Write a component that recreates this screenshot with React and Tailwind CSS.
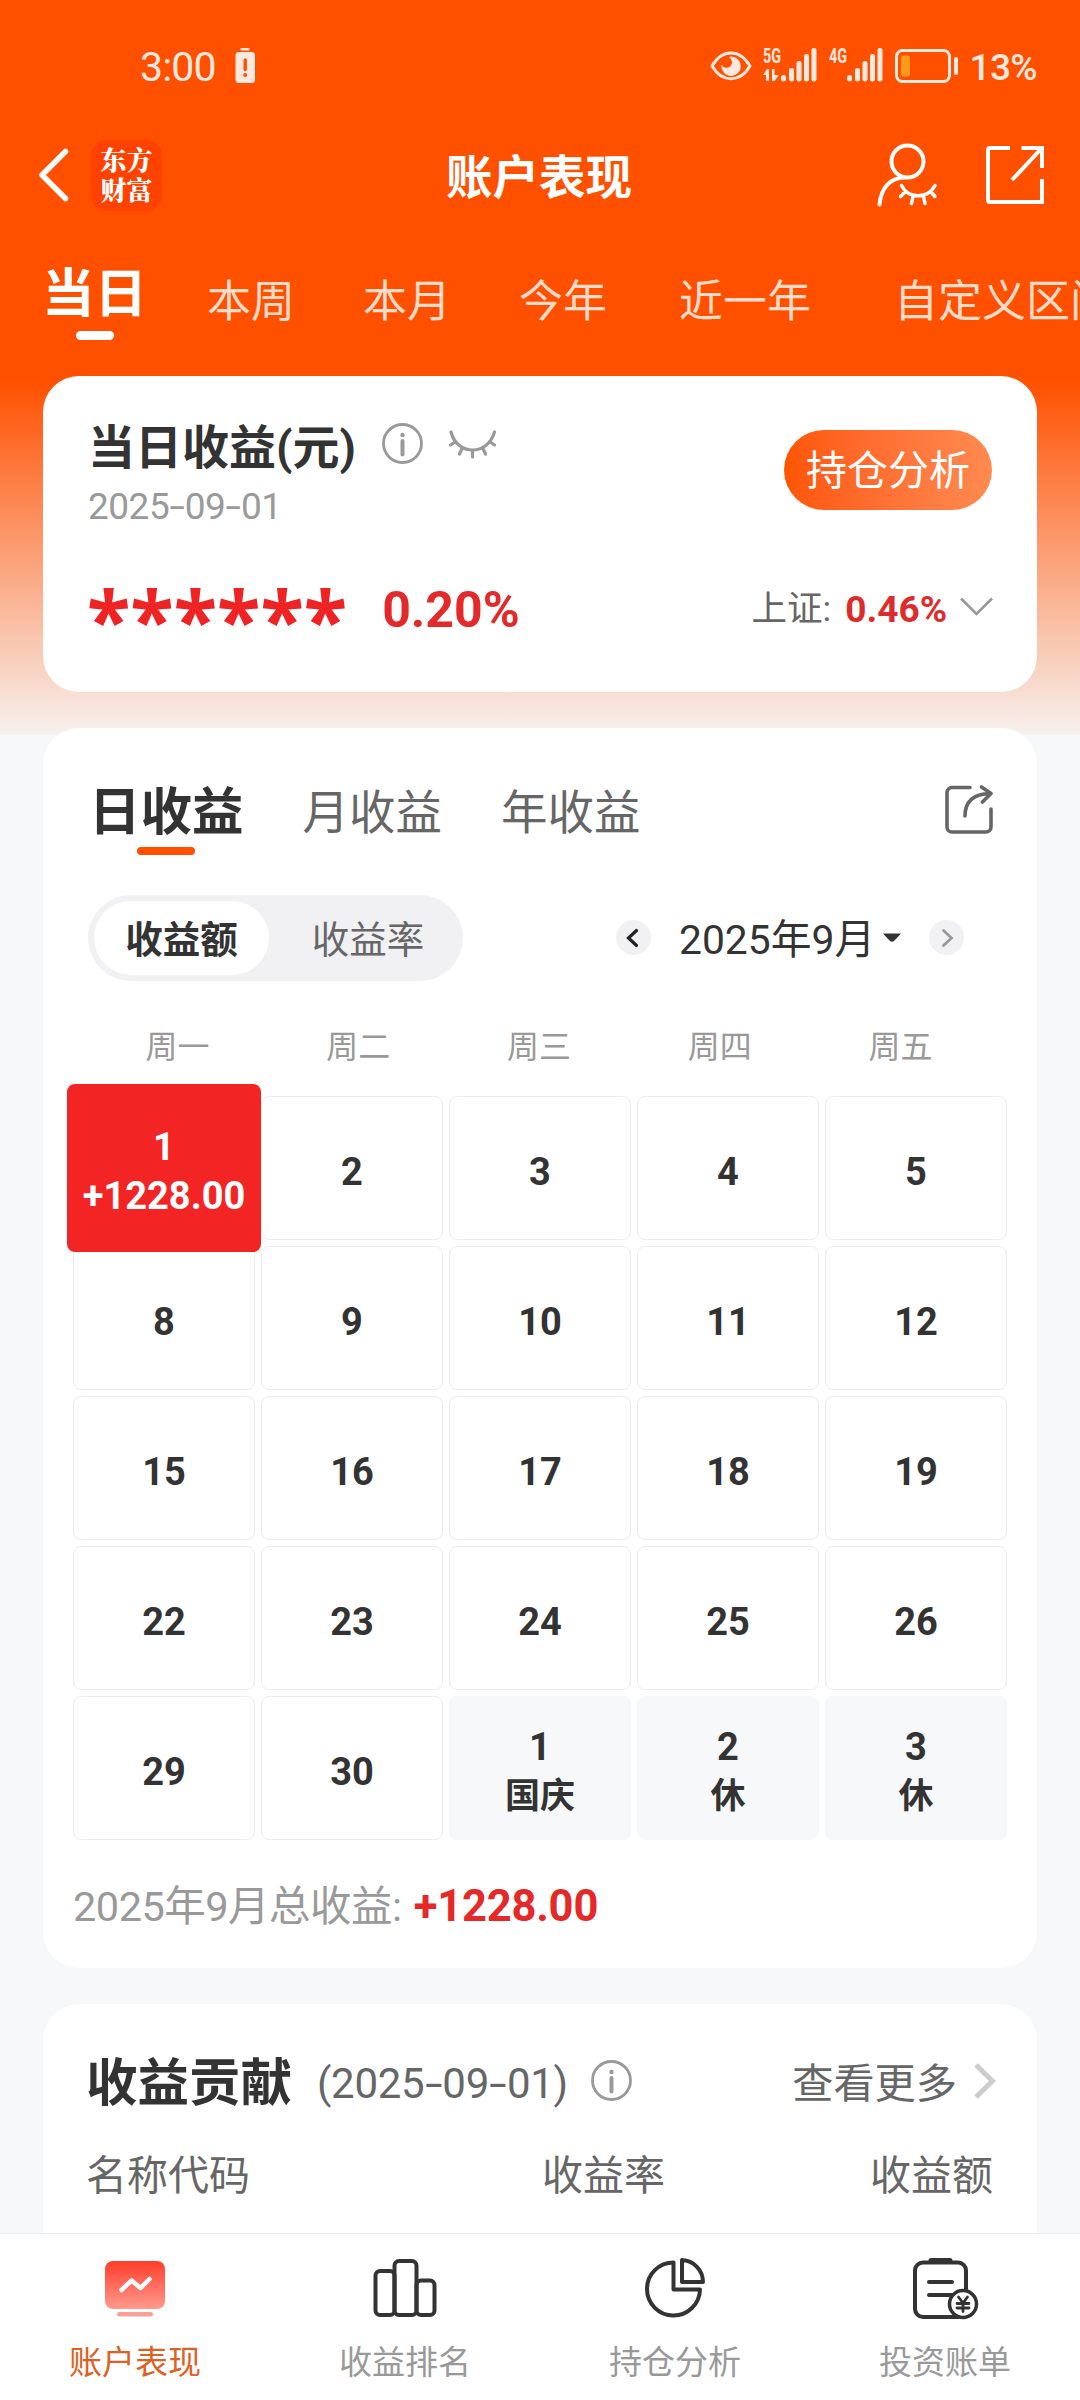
import { useState } from "react"
import clsx from "clsx"

const RANGES = [
  { label: "本周", gap: "ml-[60px]" },
  { label: "本月", gap: "ml-[68px]" },
  { label: "今年", gap: "ml-[68px]" },
  { label: "近一年", gap: "ml-[72px]" },
  { label: "自定义区间", gap: "ml-[83px]" }
]

const WEEKDAYS = ["周一", "周二", "周三", "周四", "周五"]

const DAYS = [
  { day: 1, note: "+1228.00", gain: true },
  { day: 2 }, { day: 3 }, { day: 4 }, { day: 5 },
  { day: 8 }, { day: 9 }, { day: 10 }, { day: 11 }, { day: 12 },
  { day: 15 }, { day: 16 }, { day: 17 }, { day: 18 }, { day: 19 },
  { day: 22 }, { day: 23 }, { day: 24 }, { day: 25 }, { day: 26 },
  { day: 29 }, { day: 30 },
  { day: 1, note: "国庆", rest: true },
  { day: 2, note: "休", rest: true },
  { day: 3, note: "休", rest: true }
]

const NAV = [
  { label: "账户表现", Icon: TrendIcon },
  { label: "收益排名", Icon: RankIcon },
  { label: "持仓分析", Icon: PieIcon },
  { label: "投资账单", Icon: BillIcon }
]

export default function App() {
  return (
    <div className="flex h-[2400px] w-[1080px] flex-col overflow-hidden bg-[linear-gradient(to_bottom,#ff5000_380px,#f7f1ef_735px,#f7f8fa_735px)] font-['Roboto','Noto_Sans_CJK_SC',sans-serif] text-[#333]">
      <StatusBar />
      <Header />
      <RangeTabs />
      <main className="flex min-h-0 flex-1 flex-col gap-9 overflow-hidden px-[43px]">
        <TodayCard />
        <CalendarCard />
        <ContributionCard />
      </main>
      <BottomNav />
    </div>
  )
}

function StatusBar() {
  return (
    <div className="flex h-[134px] shrink-0 items-center pl-[140px] pr-[43px] text-[#ffe9df]">
      <span className="text-[41px] leading-none tracking-[-0.8px]">3:00</span>
      <svg className="ml-[19px] -mt-[2px]" width="21" height="36" viewBox="0 0 21 36">
        <rect x="5.5" y="0" width="9" height="2.6" rx="1" fill="currentColor" />
        <rect x="0.5" y="4" width="19.5" height="31" rx="3.5" fill="currentColor" />
        <path d="M10.2 12v9.5" stroke="#ff5000" strokeWidth="3.4" strokeLinecap="round" />
        <circle cx="10.2" cy="27" r="2" fill="#ff5000" />
      </svg>

      <svg className="ml-auto -mt-[3px]" width="42" height="30" viewBox="0 0 42 30">
        <path d="M2 15C12-2.5 30-2.5 40 15C30 32 12 32 2 15Z" fill="none" stroke="currentColor" strokeWidth="3" strokeLinejoin="round" />
        <path d="M20.5 5.5A9.7 9.7 0 1 1 11.5 13.5A5.5 5.5 0 1 0 19.2 6.5Z" fill="currentColor" />
      </svg>
      <Signal label="5G" className="ml-[11px]" arrows />
      <Signal label="4G" className="ml-[12px]" />
      <svg className="ml-[12px] -mt-[2px]" width="65" height="34" viewBox="0 0 65 34">
        <rect x="1.5" y="1.5" width="53" height="31" rx="6" fill="none" stroke="currentColor" strokeWidth="3" />
        <rect x="6" y="6.5" width="9" height="21" rx="3" fill="#ff9b1a" />
        <rect x="59" y="8" width="4" height="18" rx="2" fill="currentColor" />
      </svg>
      <span className="ml-[9px] text-[37px] leading-none tracking-[-0.6px] font-medium">13%</span>
    </div>
  )
}

function Signal({ label, className, arrows }) {
  return (
    <svg className={clsx("-mt-[4px] overflow-visible", className)} width="54" height="34" viewBox="0 0 54 34" fill="currentColor">
      <text x="0" y="15" fontSize="20" fontWeight="700" textLength="18" lengthAdjust="spacingAndGlyphs">{label}</text>
      {arrows && (
        <path d="M0 27l4-6h2v12H3v-6zM9 21h2.500v6H16l-4.500 6H9z" />
      )}
      <rect x="18" y="27" width="5" height="6.500" rx="2.3" />
      <rect x="26" y="20" width="5" height="13.500" rx="2.3" />
      <rect x="33.500" y="13" width="5" height="20.500" rx="2.3" />
      <rect x="41" y="6" width="5" height="27.500" rx="2.3" />
      <rect x="48.500" y="0" width="5" height="33.500" rx="2.3" />
    </svg>
  )
}

function Header() {
  return (
    <header className="grid h-[82px] shrink-0 grid-cols-3 items-center pl-[37px] pr-[36px] text-white">
      <div className="flex items-center">
        <svg width="32" height="56" viewBox="0 0 32 56" fill="none" stroke="currentColor" strokeWidth="5.500" strokeLinecap="round" strokeLinejoin="round">
          <path d="M28.500 4.500L5 28L28.500 51.500" />
        </svg>
        <div className="ml-[22px] flex size-[71px] items-center justify-center rounded-[16px] bg-[#ff4200]">
          <span className="-mt-[3px] w-[54px] text-center font-['Noto_Serif_CJK_SC','Noto_Sans_CJK_SC',serif] text-[26px] leading-[30px] font-black">东方财富</span>
        </div>
      </div>
      <h1 className="-ml-[3px] pt-[7px] text-center text-[46.5px] leading-none font-bold">账户表现</h1>
      <div className="flex items-center justify-end gap-[48px]">
        <svg width="62" height="64" viewBox="0 0 62 64" fill="none" stroke="currentColor" strokeWidth="4" strokeLinecap="round">
          <circle cx="31.500" cy="18.500" r="16" />
          <path d="M3.500 61.500C5 44 15 35 28 34.500" />
          <path d="M25.500 42.500C32 56 52 56 59 42.500M29 49l-4.500 4.500M37 53.500l-1.500 7M47.500 53.500l1.500 7M55 49l4 4.500" strokeWidth="3.500" />
        </svg>
        <svg width="58" height="60" viewBox="0 0 58 60" fill="none" stroke="currentColor" strokeWidth="4">
          <path d="M24 3H4a2 2 0 0 0-2 2v50a2 2 0 0 0 2 2h52V34" />
          <path d="M35.500 3H56v20M55 4L26 35" />
        </svg>
      </div>
    </header>
  )
}

function RangeTabs() {
  return (
    <nav className="flex h-[160px] shrink-0 overflow-hidden pl-[42px] whitespace-nowrap">
      <button className="flex w-[105px] shrink-0 flex-col items-center self-start pt-[53px] text-[52.500px] leading-[50px] font-bold text-white">
        当日
        <span className="mt-[12px] h-[9px] w-[38px] rounded-full bg-white" />
      </button>
      {RANGES.map(r => (
        <button key={r.label} className={clsx("shrink-0 self-start pt-[64px] text-[44px] leading-[44px] text-[#ffdcca]", r.gap)}>
          {r.label}
        </button>
      ))}
    </nav>
  )
}

// los guiones van más anchos que los de la fuente
function DateText({ value }) {
  return value.split("-").map((part, i) => (
    <span key={i}>
      {i > 0 && <span className="mx-[0.08em] inline-block scale-x-150">-</span>}
      {part}
    </span>
  ))
}

function InfoIcon() {
  return (
    <svg width="41" height="41" viewBox="0 0 41 41" fill="none" stroke="#999" strokeWidth="2.800">
      <circle cx="20.500" cy="20.500" r="19" />
      <path d="M20.500 18v13.500" strokeWidth="4" strokeLinecap="round" />
      <circle cx="20.500" cy="12" r="2.200" fill="#999" stroke="none" />
    </svg>
  )
}

function TodayCard() {
  return (
    <section className="h-[316px] shrink-0 rounded-[36px] bg-white pt-[46px] pr-[45px] pl-[45px]">
      <div className="flex items-start justify-between">
        <div>
          <div className="flex h-[48px] items-center">
            <h2 className="pt-[3px] text-[47px] leading-[48px] font-bold">当日收益(元)</h2>
            <span className="ml-[26px] -mt-[5px]"><InfoIcon /></span>
            <svg className="ml-[26px] -mt-[4px]" width="47" height="29" viewBox="0 0 47 29" fill="none" stroke="#999" strokeWidth="3.200" strokeLinecap="round">
              <path d="M2 2C8 26 39 26 45.500 2M6 12l-4.500 3M13 18.500l-2.500 5.500M23.500 20.500v6.500M34 18.500l2.500 5.500M41 12l4.500 3" />
            </svg>
          </div>
          <div className="mt-[19px] text-[37px] leading-[36px] tracking-[-0.5px] text-[#999]">
            <DateText value="2025-09-01" />
          </div>
        </div>
        <button className="mt-[8px] h-[80px] w-[208px] rounded-full bg-linear-to-r from-[#ff5500] to-[#ff8a50] pt-[3px] text-[41px] leading-[77px] text-white">
          持仓分析
        </button>
      </div>
      <div className="mt-[54px] flex h-[60px] items-center">
        <span className="-ml-[1px] h-[60px] font-['Noto_Sans'] text-[80px] leading-[80px] font-bold text-[#ee2424]">******</span>
        <span className="ml-[35px] pt-[2px] text-[50px] leading-[60px] font-bold text-[#e32929]">0.20%</span>
        <span className="ml-auto pt-[1px] text-[35.500px] text-[#666]">上证:</span>
        <span className="ml-[14px] pt-[1px] text-[37px] font-bold text-[#dd2c2c]">0.46%</span>
        <svg className="mr-[-2px] ml-[12px] -mt-[4px]" width="35" height="22" viewBox="0 0 35 22" fill="none" stroke="#999" strokeWidth="2.600">
          <path d="M2 2.500l15.500 15.500L33 2.500" />
        </svg>
      </div>
    </section>
  )
}

function CalendarCard() {
  const [mode, setMode] = useState("amount")

  return (
    <section className="h-[1240px] shrink-0 rounded-[36px] bg-white px-[30px]">
      <div className="flex h-[167px] items-start pt-[59px] pr-[14px] pl-[16px]">
        <div className="flex flex-col items-center text-[51.500px] leading-[52px] font-bold">
          日收益
          <span className="mt-[8px] h-[8px] w-[58px] rounded-full bg-[#ff5000]" />
        </div>
        <span className="ml-[59px] text-[46.500px] leading-[52px] text-[#666]">月收益</span>
        <span className="ml-[59px] text-[46.500px] leading-[52px] text-[#666]">年收益</span>
        <svg className="ml-auto -mt-[3px]" width="49" height="50" viewBox="0 0 49 50" fill="none" stroke="#666" strokeWidth="3.600" strokeLinecap="round" strokeLinejoin="round">
          <path d="M26 3.500H8a5 5 0 0 0-5 5V43a5 5 0 0 0 5 5h34a5 5 0 0 0 5-5V25" />
          <path d="M21 32C21 17 30 10 46 9.500M37.500 3l9.500 6.500l-8.500 8.500" />
        </svg>
      </div>

      <div className="flex h-[86px] items-center pl-[15px]">
        <div className="flex h-[86px] w-[375px] rounded-full bg-[#f1f1f4] p-[6px] text-[37.500px] leading-[78px]">
          <button
            className={clsx("w-[175px] rounded-full", mode === "amount" ? "bg-white font-bold" : "text-[#666]")}
            onClick={() => setMode("amount")}
          >
            收益额
          </button>
          <button
            className={clsx("flex-1 rounded-full pl-[10px]", mode === "rate" ? "bg-white font-bold" : "text-[#666]")}
            onClick={() => setMode("rate")}
          >
            收益率
          </button>
        </div>
        <svg className="ml-[153px] -mt-[2px]" width="35" height="35" viewBox="0 0 35 35" fill="none">
          <circle cx="17.500" cy="17.500" r="17.500" fill="#f1f1f4" />
          <path d="M20.500 10.500l-8 7.500l8 7.500" stroke="#222" strokeWidth="3.200" strokeLinecap="round" />
        </svg>
        <span className="ml-[28px] pt-[4px] text-[40.800px] leading-none">2025年9月</span>
        <svg className="ml-[8px] -mt-[2px]" width="18" height="9" viewBox="0 0 18 9">
          <path d="M0 0.500h18L11 8q-2 1.500-4 0z" fill="#333" />
        </svg>
        <svg className="ml-[28px] -mt-[2px]" width="35" height="35" viewBox="0 0 35 35" fill="none">
          <circle cx="17.500" cy="17.500" r="17.500" fill="#f1f1f4" />
          <path d="M14.500 10.500l8 7.500l-8 7.500" stroke="#999" strokeWidth="2.800" strokeLinecap="round" />
        </svg>
      </div>

      <div className="mt-[49px] grid grid-cols-5 pr-[16px] pl-[14px] text-center text-[32px] leading-[34px] text-[#999]">
        {WEEKDAYS.map(d => <span key={d}>{d}</span>)}
      </div>

      <div className="mt-[32px] grid grid-cols-5 gap-[6px]">
        {DAYS.map((d, i) => <DayCell key={i} {...d} />)}
      </div>

      <p className="mt-[42px] flex items-center text-[41.500px] leading-[50px] tracking-[-0.500px] text-[#999]">
        2025年9月总收益:
        <span className="ml-[12px] text-[43.500px] tracking-[-0.200px] font-bold text-[#e52828]">+1228.00</span>
      </p>
    </section>
  )
}

function DayCell({ day, note, gain, rest }) {
  return (
    <div
      className={clsx(
        "flex flex-col items-center justify-center rounded-[8px] pt-[8px] text-[38px] leading-[49px] font-bold",
        gain && "z-10 -m-[6px] -my-[12px] h-[168px] bg-[#f32424] text-white",
        rest && "h-[144px] bg-[#f7f8fa]",
        !gain && !rest && "h-[144px] border border-[#ededed]"
      )}
    >
      <span>{day}</span>
      {note && <span className={rest ? "text-[35px]" : "text-[38px]"}>{note}</span>}
    </div>
  )
}

function ContributionCard() {
  return (
    <section className="h-[300px] shrink-0 rounded-t-[36px] bg-white pr-[44px] pl-[43px] pt-[54px]">
      <div className="flex h-[52px] items-center">
        <h2 className="text-[51.500px] leading-[52px] font-bold">收益贡献</h2>
        <span className="ml-[25px] text-[42px] leading-[52px] tracking-[-0.300px] text-[#666]">
          <DateText value="(2025-09-01)" />
        </span>
        <span className="ml-[23px] -mt-[7px]"><InfoIcon /></span>
        <span className="ml-auto text-[41.200px] leading-[52px] text-[#666]">查看更多</span>
        <svg className="ml-[16px] mr-[-4px] -mt-[7px]" width="24" height="38" viewBox="0 0 24 38" fill="none" stroke="#ccc" strokeWidth="5">
          <path d="M3 3l16.500 16L3 35" />
        </svg>
      </div>
      <div className="mt-[42px] grid grid-cols-[1fr_auto_1fr] text-[41px] leading-[48px] text-[#666]">
        <span>名称代码</span>
        <span className="translate-x-[64px]">收益率</span>
        <span className="text-right">收益额</span>
      </div>
    </section>
  )
}

function BottomNav() {
  return (
    <nav className="grid h-[167px] shrink-0 grid-cols-4 border-t border-[#ebecef] bg-white">
      {NAV.map(({ label, Icon }, i) => (
        <button key={label} className="flex flex-col items-center pt-[22px]">
          <Icon />
          <span className={clsx("mt-[21px] text-[33px] leading-[40px]", i === 0 ? "text-[#dc6224]" : "text-[#999]")}>
            {label}
          </span>
        </button>
      ))}
    </nav>
  )
}

function TrendIcon() {
  return (
    <svg width="66" height="66" viewBox="0 0 66 66" fill="none">
      <defs>
        <linearGradient id="trend" x1="0" y1="0" x2="0" y2="1">
          <stop stopColor="#ff3d2a" />
          <stop offset="1" stopColor="#ff9a8f" />
        </linearGradient>
      </defs>
      <rect x="3" y="5" width="60" height="48" rx="8" fill="url(#trend)" />
      <path d="M19.500 34l10-9.500l9 7.500l9-9" stroke="#fff" strokeWidth="4.500" strokeLinecap="round" strokeLinejoin="round" />
      <rect x="15" y="56" width="36" height="4.500" rx="2.200" fill="#f9a196" />
    </svg>
  )
}

function RankIcon() {
  return (
    <svg width="66" height="66" viewBox="0 0 66 66" fill="none" stroke="#333" strokeWidth="4">
      <rect x="3.500" y="15" width="19" height="44" rx="4.500" />
      <rect x="22.500" y="5" width="22" height="54" rx="4.500" />
      <rect x="44.500" y="24.500" width="18" height="34.500" rx="4.500" />
    </svg>
  )
}

function PieIcon() {
  return (
    <svg width="66" height="66" viewBox="0 0 66 66" fill="none" stroke="#333" strokeWidth="4" strokeLinejoin="round">
      <path d="M31.500 6.500A26.500 26.500 0 1 0 58 33.500H31.500Z" />
      <path d="M40 4A22 22 0 0 1 61 26H40Z" />
    </svg>
  )
}

function BillIcon() {
  return (
    <svg width="70" height="66" viewBox="0 0 70 66" fill="none" stroke="#333" strokeWidth="4" strokeLinecap="round">
      <rect x="5" y="6.500" width="51" height="54.500" rx="8" />
      <path d="M21 4.500h19" strokeWidth="5" />
      <path d="M19 26h23M19 39h23" />
      <circle cx="53" cy="48" r="13.500" fill="#fff" stroke="#333" strokeWidth="3.500" />
      <path d="M48.500 41l4.500 6l4.500-6M53 47v8.500M47 47.500h12M47 52h12" strokeWidth="2.800" />
    </svg>
  )
}
